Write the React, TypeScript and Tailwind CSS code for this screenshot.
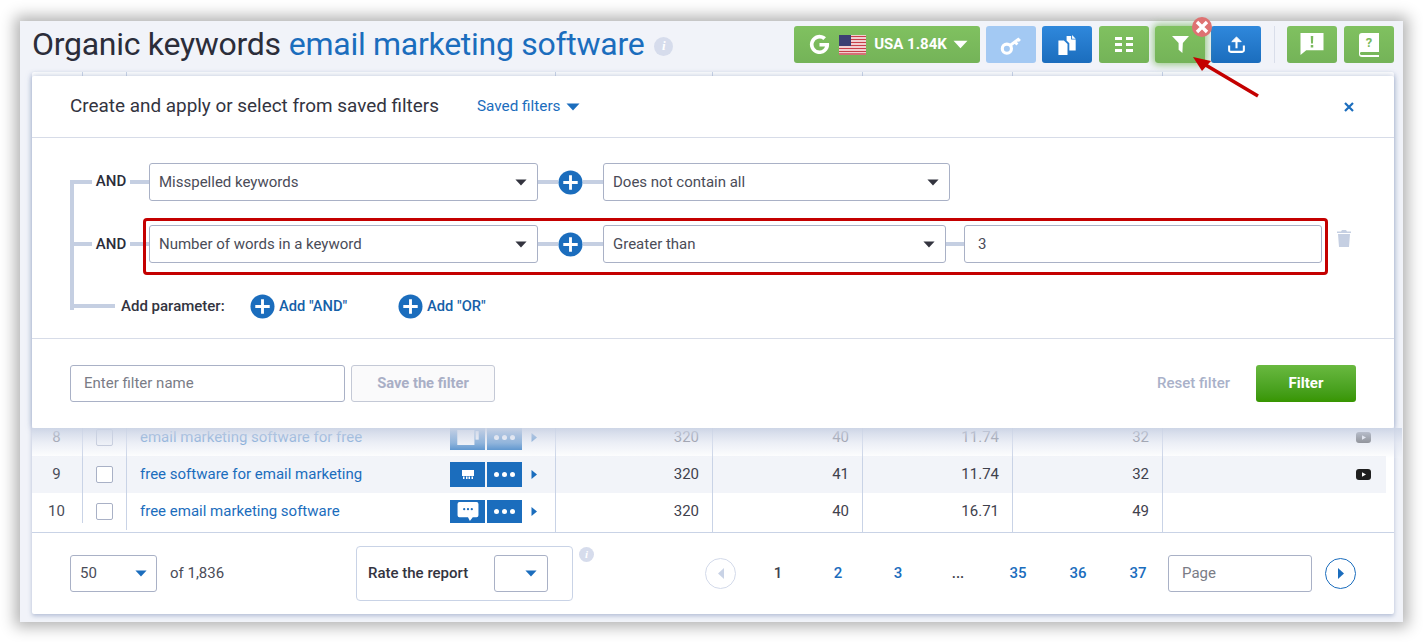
import React from "react";

const Tri = ({ className = "" }: { className?: string }) => (
  <svg viewBox="0 0 14 8" className={className} fill="currentColor"><path d="M0.5 0.5h13L7 7.5z" /></svg>
);

const Plus = () => (
  <svg viewBox="0 0 26 26" className="w-[25px] h-[25px] shrink-0">
    <circle cx="13" cy="13" r="12.5" fill="#1b6dbd" />
    <path d="M13 5.5v15M5.5 13h15" stroke="#fff" strokeWidth="3" />
  </svg>
);

const GBtn = ({ w = "w-[50px]", tone = "green", children, extra = "" }: { w?: string; tone?: string; children: React.ReactNode; extra?: string }) => (
  <div
    className={`${w} h-[37px] rounded-[3px] flex items-center justify-center shrink-0 ${
      tone === "green"
        ? "bg-gradient-to-b from-[#80c160] to-[#74b358]"
        : tone === "blue"
        ? "bg-gradient-to-b from-[#2f88dc] to-[#1b6dbd]"
        : "bg-[#a3c9f3]"
    } ${extra}`}
  >
    {children}
  </div>
);

const Select = ({ w, text, h = "h-[38px]", tri = "text-[#33343f]" }: { w: string; text: string; h?: string; tri?: string }) => (
  <div className={`${w} ${h} shrink-0 bg-white border border-[#a9b1c6] rounded-[3px] flex items-center justify-between pl-[9px] pr-[10px] text-[15px] text-[#4a4c58]`}>
    <span>{text}</span>
    <Tri className={`w-[12px] h-[7px] ${tri}`} />
  </div>
);

const Conn = ({ w }: { w: string }) => <div className={`${w} h-[4px] bg-[#c5cfe2] shrink-0`} />;

const Row = ({ n, kw, vol, kd, cpc, cl, bg, yt, icon, clip }: { n: string; kw: string; vol: string; kd: string; cpc: string; cl: string; bg: string; yt?: boolean; icon: React.ReactNode; clip?: boolean }) => (
  <div className="flex h-[37px] text-[15px] text-[#3f414d]">
    <div className={`flex mr-[8px] w-[1354px] ${bg}`}>
      <div className="w-[50px] flex items-center justify-center pr-[1px] text-[15px] text-[#4a4c58]">{n}</div>
      <div className={`w-[44px] border-l border-[#c9d3e6] flex items-center justify-center pr-[1px] ${clip ? "mb-[7px] pt-[7px]" : ""}`}>
        <div className="w-[17px] h-[17px] bg-white border border-[#a9b1c6] rounded-[2px]" />
      </div>
      <div className="w-[429px] border-l border-[#c9d3e6] flex items-center pl-[13px] text-[#1b6dbd]">
        <span className="flex-1">{kw}</span>
        <div className={`flex gap-[2px] ${clip ? "self-end mb-[7px]" : "items-center"}`}>
          <div className={`w-[35px] ${clip ? "h-[23px]" : "h-[25px]"} bg-[#1b6dbd] flex items-center justify-center`}>{icon}</div>
          <div className={`w-[35px] ${clip ? "h-[23px]" : "h-[25px]"} bg-[#1b6dbd] flex items-center justify-center gap-[3px]`}>
            <span className="w-[5px] h-[5px] rounded-full bg-white" />
            <span className="w-[5px] h-[5px] rounded-full bg-white" />
            <span className="w-[5px] h-[5px] rounded-full bg-white" />
          </div>
        </div>
        <svg viewBox="0 0 6 9" className="w-[6px] h-[9px] ml-[9px] mr-[18px]"><path d="M0.5 0v9L6 4.5z" fill="#1b6dbd" /></svg>
      </div>
      <div className="w-[157px] border-l border-[#c9d3e6] flex items-center justify-end pr-[13px]">{vol}</div>
      <div className="w-[150px] border-l border-[#c9d3e6] flex items-center justify-end pr-[13px]">{kd}</div>
      <div className="w-[150px] border-l border-[#c9d3e6] flex items-center justify-end pr-[13px]">{cpc}</div>
      <div className="w-[150px] border-l border-[#c9d3e6] flex items-center justify-end pr-[13px]">{cl}</div>
      <div className="flex-1 border-l border-[#c9d3e6] flex items-center justify-end pr-[15px]">
        {yt && (
          <svg viewBox="0 0 15 11" className="w-[15px] h-[11px]">
            <rect width="15" height="11" rx="3" fill="#1f1f1f" />
            <path d="M6 3.3v4.4L10 5.5z" fill="#fff" />
          </svg>
        )}
      </div>
    </div>
  </div>
);

const InfoDot = ({ className }: { className: string }) => (
  <div className={`rounded-full bg-[#d6dcec] text-white flex items-center justify-center font-bold italic font-['Liberation_Serif',serif] shrink-0 ${className}`}>i</div>
);

const Page = ({ t, blue = true }: { t: string; blue?: boolean }) => (
  <div className={`w-[60px] shrink-0 text-center text-[15px] font-medium ${blue ? "text-[#1b6dbd]" : "text-[#3f414d]"}`}>{t}</div>
);

export default function App() {
  return (
    <div className="w-[1423px] h-[642px] bg-white pt-[21px] pl-[20px] overflow-hidden font-['Roboto',sans-serif]">
      <div className="relative w-[1383px] h-[601px] bg-[#f1f3f9] pl-[12px] shadow-[0_0_14px_5px_rgba(0,0,0,0.3)]">
        {/* header */}
        <div className="h-[51px] flex items-start justify-between pr-[9px] pt-[5px]">
          <div className="flex items-center h-[37px]">
            <span className="text-[32px] leading-[37px] text-[#2b2d3a] tracking-[-0.28px]">Organic keywords</span>
            <span className="text-[32px] leading-[37px] text-[#1b6dbd] ml-[8px] tracking-[-0.28px]">email marketing software</span>
            <InfoDot className="w-[19px] h-[19px] text-[13px] ml-[10px] mt-[3px]" />
          </div>
          <div className="flex items-center gap-[6px]">
            <GBtn w="w-[186px]" extra="pl-[3px]">
              <svg viewBox="0 0 24 24" className="w-[21px] h-[21px]"><path d="M12 10.2v4h6.3c-.6 2.6-3 4.6-6.3 4.6a6.8 6.8 0 1 1 4.4-12l3-3A11 11 0 1 0 23 12c0-.6 0-1.2-.2-1.8z" fill="#fff" /></svg>
              <svg viewBox="0 0 27 20" className="w-[27px] h-[20px] ml-[9px]">
                <rect width="27" height="20" fill="#fff" />
                <path d="M0 1.5h27M0 4.5h27M0 7.5h27M0 10.5h27M0 13.5h27M0 16.5h27M0 19h27" stroke="#c8404a" strokeWidth="1.5" />
                <rect width="12" height="11" fill="#3c3f73" />
              </svg>
              <span className="text-white text-[15px] font-bold ml-[8px]">USA 1.84K</span>
              <Tri className="w-[15px] h-[9px] text-white ml-[6px]" />
            </GBtn>
            <GBtn tone="pale">
              <svg viewBox="0 0 24 24" className="w-[24px] h-[22px]" fill="none" stroke="#fff"><circle cx="7.5" cy="16" r="5" strokeWidth="3.4" /><path d="M11 12.5 21 5M16 8.5l3 3M19.5 5.5l2.2 2.2" strokeWidth="3.2" /></svg>
            </GBtn>
            <GBtn tone="blue">
              <svg viewBox="0 0 20 22" className="w-[19px] h-[20px]" fill="#fff"><path d="M0 6h6l4 4v12H0zM9 1h5v4h5v12h-7v-8L9 6z" /><path d="M15 0v4h4z" /></svg>
            </GBtn>
            <GBtn extra="ml-[1px]">
              <svg viewBox="0 0 18 15" className="w-[18px] h-[15px]" fill="#fff"><rect width="7" height="3" /><rect x="11" width="7" height="3" /><rect y="6" width="7" height="3" /><rect x="11" y="6" width="7" height="3" /><rect y="12" width="7" height="3" /><rect x="11" y="12" width="7" height="3" /></svg>
            </GBtn>
            <GBtn extra="shadow-[0_0_7px_2px_rgba(121,185,92,0.7)] relative z-10">
              <svg viewBox="0 0 18 18" className="w-[17px] h-[17px]" fill="#fff"><path d="M0 0h18l-6.5 7.5L11 18l-4-3.5V7.5z" /></svg>
            </GBtn>
            <GBtn tone="blue">
              <svg viewBox="0 0 18 18" className="w-[17px] h-[17px]" fill="none" stroke="#fff" strokeWidth="2.2"><path d="M1.2 10v5a1.8 1.8 0 0 0 1.8 1.8h12a1.8 1.8 0 0 0 1.8-1.8v-5" /><path d="M9 13V5" /><path d="M4 6 9 1l5 5z" fill="#fff" strokeWidth="1" /></svg>
            </GBtn>
            <div className="w-[1px] h-[37px] bg-[#d9deea] mx-[6.5px]" />
            <GBtn>
              <svg viewBox="0 0 24 24" className="w-[24px] h-[23px]"><path d="M0 0h24v18H6l-6 5z" fill="#fff" /><path d="M10.7 3h2.6l-.3 8h-2zM10.7 12.5h2.6V15h-2.6z" fill="#79b95c" /></svg>
            </GBtn>
            <GBtn extra="ml-[1px]">
              <svg viewBox="0 0 20 24" className="w-[20px] h-[24px]"><path d="M0 3a3 3 0 0 1 3-3h17v19H3a2 2 0 0 0-1 0 1.5 1.5 0 0 0 1 3h17v2H3a3 3 0 0 1-3-3z" fill="#fff" /><text x="10" y="14" fontSize="13" fontWeight="700" textAnchor="middle" fill="#79b95c" fontFamily="Roboto">?</text></svg>
            </GBtn>
          </div>
        </div>

        {/* table card */}
        <div className="relative w-[1362px] h-[542px] bg-white shadow-[0_2px_4px_rgba(120,140,180,0.5)] rounded-[2px]">
          <div className="flex h-[347px] mr-[8px]">
            <div className="w-[50px]" />
            <div className="w-[44px] border-l border-[#c9d3e6]" />
            <div className="w-[429px] border-l border-[#c9d3e6]" />
            <div className="w-[157px] border-l border-[#c9d3e6]" />
            <div className="w-[150px] border-l border-[#c9d3e6]" />
            <div className="w-[150px] border-l border-[#c9d3e6]" />
            <div className="w-[150px] border-l border-[#c9d3e6]" />
            <div className="flex-1 border-l border-[#c9d3e6]" />
          </div>
          <Row n="8" kw="email marketing software for free" vol="320" kd="40" cpc="11.74" cl="32" bg="bg-white" yt
            icon={<svg viewBox="0 0 20 14" className="w-[22px] h-[15px]" fill="#fff"><rect width="16" height="14" /><rect x="17" y="1" width="3" height="8" /></svg>} />
          <Row n="9" kw="free software for email marketing" vol="320" kd="41" cpc="11.74" cl="32" bg="bg-[#f2f4f9]" yt
            icon={<svg viewBox="0 0 12 9" className="w-[12px] h-[9px]" fill="#fff"><path d="M0 0h12v6H0zM1 6.5h1.5V9H1zM4 6.5h1.5V9H4zM6.5 6.5H8V9H6.5zM9.5 6.5H11V9H9.5z" /></svg>} />
          <Row n="10" kw="free email marketing software" vol="320" kd="40" cpc="16.71" cl="49" bg="bg-white" clip
            icon={<svg viewBox="0 0 22 20" className="w-[22px] h-[19px]"><path d="M2 0h18a2 2 0 0 1 2 2v12a2 2 0 0 1-2 2h-4l-3 4-2-4H2a2 2 0 0 1-2-2V2a2 2 0 0 1 2-2z" fill="#fff" /><circle cx="7" cy="7.5" r="1.2" fill="#1b6dbd" /><circle cx="11" cy="7.5" r="1.2" fill="#1b6dbd" /><circle cx="15" cy="7.5" r="1.2" fill="#1b6dbd" /></svg>} />
          <div className="flex h-[2px] mr-[8px]">
            <div className="w-[523px]" />
            <div className="w-[157px] border-l border-[#c9d3e6]" />
            <div className="w-[150px] border-l border-[#c9d3e6]" />
            <div className="w-[150px] border-l border-[#c9d3e6]" />
            <div className="w-[150px] border-l border-[#c9d3e6]" />
            <div className="flex-1 border-l border-[#c9d3e6]" />
          </div>

          {/* footer */}
          <div className="h-[82px] border-t border-[#c9d3e6] flex items-center pl-[38px] text-[15px] text-[#4a4c58]">
            <div className="w-[87px] h-[37px] shrink-0 border border-[#a9b1c6] rounded-[3px] flex items-center justify-between pl-[9px] pr-[9px]">
              <span>50</span>
              <Tri className="w-[12px] h-[7px] text-[#1b6dbd]" />
            </div>
            <span className="ml-[13px] w-[186px] shrink-0">of 1,836</span>
            <div className="w-[217px] h-[55px] shrink-0 border border-[#c9d3e6] rounded-[4px] flex items-center justify-between pl-[11px] pr-[24px] font-medium text-[#33343f] mt-[-1px]">
              <span>Rate the report</span>
              <div className="w-[54px] h-[37px] border border-[#a9b1c6] rounded-[3px] flex items-center justify-end pr-[10px]">
                <Tri className="w-[12px] h-[7px] text-[#1b6dbd]" />
              </div>
            </div>
            <InfoDot className="w-[15px] h-[15px] text-[11px] ml-[6px] mb-[38px]" />
            <div className="w-[31px] h-[31px] shrink-0 rounded-full border border-[#d3daea] flex items-center justify-center ml-[111px] mr-[12px]">
              <svg viewBox="0 0 6 11" className="w-[6px] h-[11px]"><path d="M6 0v11L0 5.5z" fill="#c9d3e6" /></svg>
            </div>
            <Page t="1" blue={false} />
            <Page t="2" />
            <Page t="3" />
            <Page t="..." blue={false} />
            <Page t="35" />
            <Page t="36" />
            <Page t="37" />
            <div className="w-[144px] h-[37px] shrink-0 border border-[#a9b1c6] rounded-[3px] flex items-center pl-[13px] text-[#7a7c86]">Page</div>
            <div className="w-[31px] h-[31px] shrink-0 rounded-full border border-[#1b6dbd] flex items-center justify-center ml-[13px]">
              <svg viewBox="0 0 6 11" className="w-[6px] h-[11px] ml-[1px]"><path d="M0 0v11l6-5.5z" fill="#1b6dbd" /></svg>
            </div>
          </div>

          {/* filter modal */}
          <div className="absolute left-0 right-0 top-[4px] h-[352px] bg-white rounded-[2px] shadow-[0_0_6px_rgba(150,165,200,0.7)] flex flex-col">
            <div className="h-[62px] shrink-0 border-b border-[#d7dce8] flex items-center pl-[38px] pr-[40px]">
              <span className="text-[18.9px] text-[#33343f]">Create and apply or select from saved filters</span>
              <span className="text-[15.3px] text-[#1b6dbd] ml-[38px]">Saved filters</span>
              <Tri className="w-[14px] h-[8px] text-[#1b6dbd] ml-[6px]" />
              <svg viewBox="0 0 10 10" className="w-[10px] h-[10px] ml-auto"><path d="M1 1l8 8M9 1l-8 8" stroke="#1b6dbd" strokeWidth="2.2" /></svg>
            </div>

            <div className="h-[201px] shrink-0 border-b border-[#d7dce8] flex pl-[38px] pt-[25px]">
              <div className="w-[4px] h-[130px] bg-[#c5cfe2] mt-[17px] shrink-0" />
              <div className="flex flex-col">
                <div className="flex items-center h-[38px]">
                  <Conn w="w-[18px]" />
                  <span className="w-[38px] text-center text-[15px] font-medium text-[#2b2d3a] mt-[-2px]">AND</span>
                  <Conn w="w-[19px]" />
                  <Select w="w-[389px]" text="Misspelled keywords" />
                  <Conn w="w-[20px]" />
                  <Plus />
                  <Conn w="w-[20px]" />
                  <Select w="w-[347px]" text="Does not contain all" />
                </div>
                <div className="flex items-center h-[38px] mt-[24px]">
                  <Conn w="w-[18px]" />
                  <span className="w-[38px] text-center text-[15px] font-medium text-[#2b2d3a]">AND</span>
                  <Conn w="w-[19px]" />
                  <div className="relative flex items-center">
                    <div className="absolute left-[-6px] right-[-6px] top-[-7px] bottom-[-12px] border-[3px] border-[#c40000] rounded-[4px]" />
                    <Select w="w-[389px]" text="Number of words in a keyword" />
                    <Conn w="w-[20px]" />
                    <Plus />
                    <Conn w="w-[20px]" />
                    <Select w="w-[343px]" text="Greater than" />
                    <Conn w="w-[18px]" />
                    <div className="w-[358px] h-[38px] border border-[#a9b1c6] rounded-[3px] flex items-center pl-[13px] text-[15px] text-[#4a4c58]">3</div>
                  </div>
                  <svg viewBox="0 0 14 17" className="w-[14px] h-[17px] ml-[15px] mt-[-11px]" fill="#c5cfe2"><path d="M5 0h4l1 1.5h4V3H0V1.5h4zM1 4h12l-1 13H2z" /></svg>
                </div>
                <div className="flex items-center h-[38px] mt-[24px] text-[15px] font-medium">
                  <Conn w="w-[41px]" />
                  <span className="ml-[6px] w-[129px] text-[#33343f]">Add parameter:</span>
                  <Plus />
                  <span className="ml-[4px] w-[119px] text-[14.7px] text-[#1560a8]">Add "AND"</span>
                  <Plus />
                  <span className="ml-[4px] text-[14.7px] text-[#1560a8]">Add "OR"</span>
                </div>
              </div>
            </div>

            <div className="flex-1 flex items-start pt-[26px] pl-[38px] pr-[38px] text-[15px]">
              <div className="w-[275px] h-[37px] border border-[#a9b1c6] rounded-[3px] flex items-center pl-[13px] text-[#7a7c86]">Enter filter name</div>
              <div className="w-[144px] h-[37px] ml-[6px] border border-[#c4c9d6] bg-[#fafafb] rounded-[3px] flex items-center justify-center font-bold text-[14.7px] text-[#a9afc6]">Save the filter</div>
              <span className="ml-auto font-medium text-[#a9b1c9] mt-[7px] mr-[26px]">Reset filter</span>
              <div className="w-[100px] h-[37px] rounded-[3px] bg-gradient-to-b from-[#69b93f] to-[#379500] flex items-center justify-center font-bold text-white">Filter</div>
            </div>

            <div className="absolute left-0 right-[-8px] top-full h-[30px] bg-gradient-to-b from-[#cdd5e6f0] via-[#dfe4f099] to-[#ffffff11]" />
          </div>
        </div>

        {/* red X badge and arrow */}
        <svg viewBox="0 0 20 20" className="absolute left-[1172px] top-[-4px] w-[20px] h-[20px] z-20">
          <circle cx="10" cy="10" r="10" fill="#de7272" />
          <path d="M5 5l10 10M15 5 5 15" stroke="#fff" strokeWidth="3.4" />
        </svg>
        <svg viewBox="0 0 70 50" className="absolute left-[1170px] top-[34px] w-[70px] h-[50px] z-20">
          <path d="M68 41 14 9" stroke="#c40000" strokeWidth="3.5" />
          <path d="M3 2 21 6 12 16z" fill="#c40000" />
        </svg>
      </div>
    </div>
  );
}
